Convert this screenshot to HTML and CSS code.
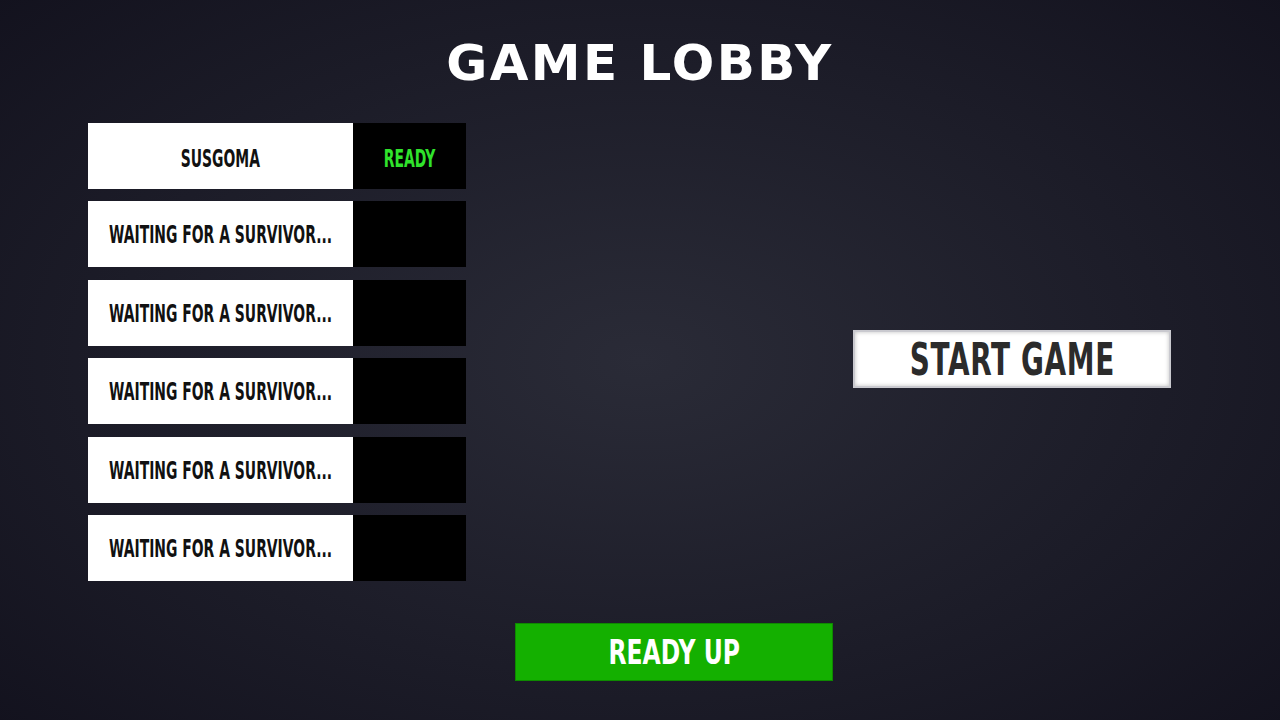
FILE: index.html
```html
<!DOCTYPE html>
<html lang="en">
<head>
    <meta charset="UTF-8">
    <meta name="viewport" content="width=device-width, initial-scale=1.0">
    <title>Game Lobby</title>
    <link rel="stylesheet" href="styles.css">
</head>
<body>
    <h1 class="title">GAME LOBBY</h1>

    <div class="lobby">
        <!-- Player slots -->
        <div class="players">
            <div class="player">
                <div class="player-name centered"><span class="label">SUSGOMA</span></div>
                <div class="player-status ready"><span class="label">READY</span></div>
            </div>
            <div class="player">
                <div class="player-name"><span class="label">WAITING FOR A SURVIVOR...</span></div>
                <div class="player-status"></div>
            </div>
            <div class="player">
                <div class="player-name"><span class="label">WAITING FOR A SURVIVOR...</span></div>
                <div class="player-status"></div>
            </div>
            <div class="player">
                <div class="player-name"><span class="label">WAITING FOR A SURVIVOR...</span></div>
                <div class="player-status"></div>
            </div>
            <div class="player">
                <div class="player-name"><span class="label">WAITING FOR A SURVIVOR...</span></div>
                <div class="player-status"></div>
            </div>
            <div class="player">
                <div class="player-name"><span class="label">WAITING FOR A SURVIVOR...</span></div>
                <div class="player-status"></div>
            </div>
        </div>

        <div class="side">
            <button class="start-button"><span class="label">START GAME</span></button>
        </div>
    </div>

    <div class="footer">
        <button class="ready-button"><span class="label">READY UP</span></button>
    </div>
</body>
</html>
```

FILE: styles.css
```css
/* Lobby */
body {
    margin: 0;
    height: 720px;
    overflow: hidden;
    background: radial-gradient(ellipse 75% 80% at 50% 50%, #2a2b37 0%, #1c1c28 55%, #11101c 100%);
    font-family: "DejaVu Sans", sans-serif;
    color: #111;
}

/* condensed display text: the glyphs are squeezed horizontally */
.label {
    display: inline-block;
    white-space: nowrap;
    transform: scaleX(0.58);
    transform-origin: left center;
}

.title {
    margin: 0;
    padding-top: 36px;
    text-align: center;
    font-family: "DejaVu Sans", sans-serif;
    font-weight: bold;
    font-size: 50px;
    letter-spacing: 2.4px;
    line-height: 54px;
    color: #fff;
}

.lobby {
    display: flex;
    margin-top: 33px;
    padding-left: 88px;
}

.players {
    display: flex;
    flex-direction: column;
    gap: 12.4px;
}

.player {
    display: flex;
    height: 66px;
}

.player-name {
    width: 265px;
    background-color: #fff;
    display: flex;
    align-items: center;
    padding-left: 21px;
    box-sizing: border-box;
    font-weight: bold;
    font-size: 24px;
    overflow: hidden;
}

.player-name .label {
    padding-top: 2px;
}

.player-name.centered {
    justify-content: center;
    padding-left: 0;
}

.player-name.centered .label,
.player-status .label {
    padding-top: 6px;
}

.player-name.centered .label,
.player-status .label,
.start-button .label,
.ready-button .label {
    transform-origin: center center;
}

.player-status {
    width: 113px;
    background-color: #000;
    display: flex;
    align-items: center;
    justify-content: center;
    font-weight: bold;
    font-size: 24px;
}

.player-status.ready {
    color: #30e32c;
}

.side {
    margin-left: 387px;
    padding-top: 207px;
}

.start-button {
    width: 318px;
    height: 58px;
    background-color: #fff;
    border: 2px solid #c9c9cf;
    box-shadow: inset 0 0 4px rgba(0, 0, 0, 0.25);
    font-family: inherit;
    font-weight: bold;
    font-size: 45px;
    color: #2b2b2b;
    cursor: pointer;
    padding: 0;
    display: flex;
    align-items: center;
    justify-content: center;
}

.start-button .label {
    transform: scaleX(0.62);
    letter-spacing: 1px;
}

.footer {
    display: flex;
    justify-content: center;
    margin-top: 42px;
}

.ready-button {
    width: 318px;
    height: 58px;
    margin-left: 68px;
    background-color: #14b000;
    border: 1px solid #0e8a00;
    font-family: inherit;
    font-weight: bold;
    font-size: 34px;
    color: #fff;
    cursor: pointer;
    padding: 0;
    display: flex;
    align-items: center;
    justify-content: center;
}

.ready-button .label {
    transform: scaleX(0.69);
}
```
